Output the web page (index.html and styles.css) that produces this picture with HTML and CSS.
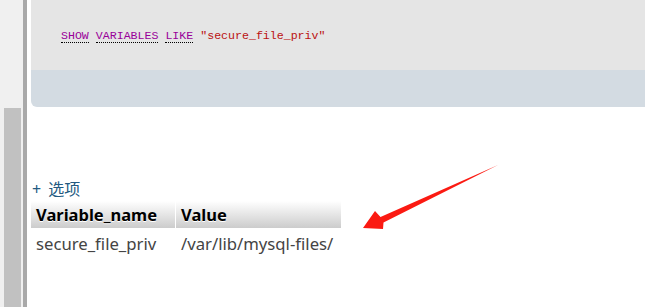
FILE: index.html
```html
<!DOCTYPE html>
<html lang="zh">
<head>
    <meta charset="UTF-8">
    <title>phpMyAdmin - SQL</title>
    <link rel="stylesheet" href="styles.css">
</head>
<body>
    <div class="frame">
        <div class="sidebar">
            <div class="thumb"></div>
        </div>
        <div class="divider"></div>

        <div class="main">
            <div class="sqlbox">
                <div class="sqlquery">
                    <code><a class="kw">SHOW</a> <a class="kw">VARIABLES</a> <a class="kw">LIKE</a> <span class="str">"secure_file_priv"</span></code>
                </div>
                <div class="sqltools"></div>
            </div>

            <div class="results">
                <a class="options" href="#">+ 选项</a>
                <table class="data">
                    <thead>
                        <tr>
                            <th class="col-name">Variable_name</th>
                            <th class="col-value">Value</th>
                        </tr>
                    </thead>
                    <tbody>
                        <tr>
                            <td>secure_file_priv</td>
                            <td>/var/lib/mysql-files/</td>
                        </tr>
                    </tbody>
                </table>
            </div>
        </div>
    </div>

    <!-- annotation arrow drawn over the page -->
    <svg class="arrow" width="645" height="307" viewBox="0 0 645 307">
        <polygon points="498,165 380.5,217 375,211 363,228 383,229 383.5,222.5" fill="#fb1a12"/>
    </svg>
</body>
</html>
```

FILE: styles.css
```css
* {
    margin: 0;
    padding: 0;
    box-sizing: border-box;
}

html, body {
    height: 100%;
    overflow: hidden;
}

body {
    background: #fff;
    font-family: "Noto Sans", "Noto Sans CJK SC", sans-serif;
    color: #444;
}

.frame {
    display: flex;
    height: 100%;
}

.sidebar {
    width: 23px;
    background: #f0f0f0;
    display: flex;
    flex-direction: column;
    justify-content: flex-end;
    padding-left: 4px;
    padding-right: 2px;
}

.thumb {
    height: 199px;
    background: #c1c1c1;
}

.divider {
    width: 4px;
    background: #a9a9a9;
}

.main {
    flex: 1;
    padding-left: 4px;
    min-width: 0;
}

.sqlbox {
    border-bottom-left-radius: 6px;
    overflow: hidden;
}

.sqlquery {
    height: 70px;
    background: #e5e5e5;
    padding: 22px 0 0 30px;
}

.sqlquery code {
    font-family: "Liberation Mono", "Courier New", monospace;
    font-size: 11.6px;
    line-height: 14px;
}

.kw {
    color: #909;
    text-decoration: none;
    border-bottom: 1px dotted #000;
}

.str {
    color: #b11;
}

.sqltools {
    height: 37px;
    background: #d3dbe2;
}

.results {
    padding-top: 72px;
}

.options {
    display: block;
    color: #235a81;
    text-decoration: none;
    font-size: 16px;
    line-height: 21px;
    word-spacing: 3px;
    padding-left: 1px;
    margin-bottom: 1px;
}

.data {
    border-collapse: separate;
    border-spacing: 0;
}

.data th {
    background: linear-gradient(#fff, #ccc);
    color: #000;
    font-weight: bold;
    text-shadow: 0 1px 0 #fff;
    text-align: left;
    font-size: 16.5px;
    height: 27px;
    padding: 0 5px;
}

.data th.col-name {
    width: 145px;
    border-right: 1px solid #fff;
}

.data th.col-value {
    width: 165px;
}

.data td {
    font-size: 16.7px;
    height: 31px;
    padding: 0 5px;
    color: #444;
}

.arrow {
    position: absolute;
    left: 0;
    top: 0;
    pointer-events: none;
}
```
